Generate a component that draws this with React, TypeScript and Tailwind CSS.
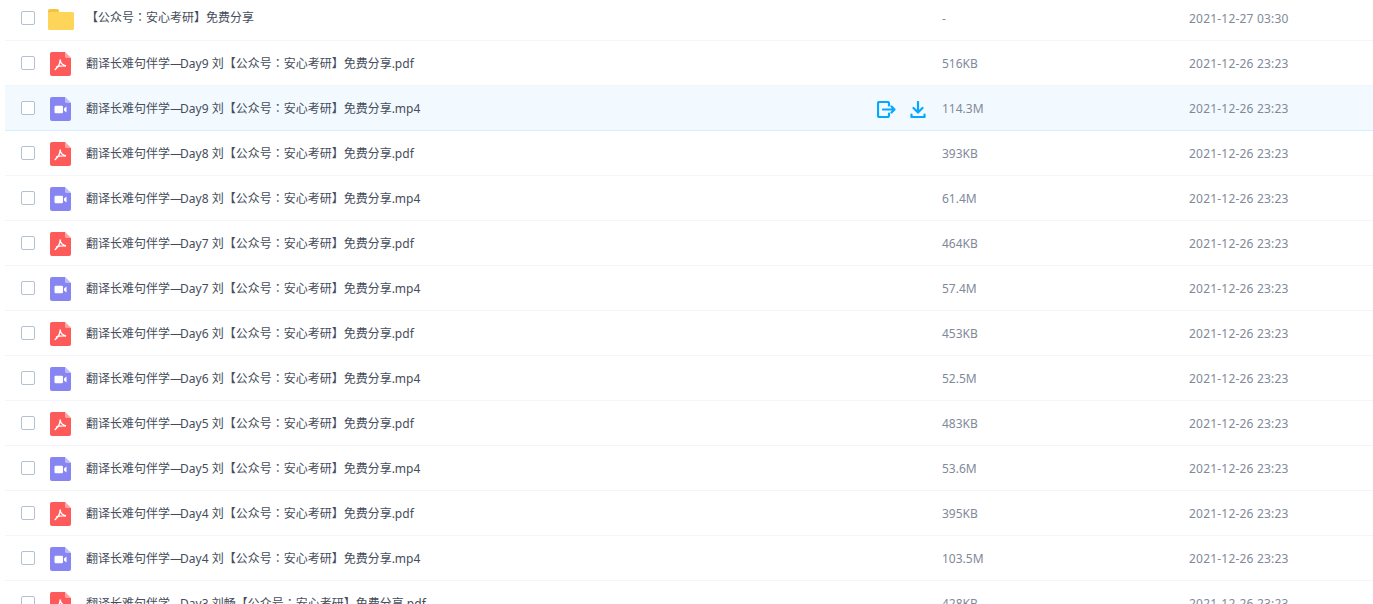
const files = [
  { day: 'Day9 刘', ext: 'pdf', size: '516KB' },
  { day: 'Day9 刘', ext: 'mp4', size: '114.3M', active: true },
  { day: 'Day8 刘', ext: 'pdf', size: '393KB' },
  { day: 'Day8 刘', ext: 'mp4', size: '61.4M' },
  { day: 'Day7 刘', ext: 'pdf', size: '464KB' },
  { day: 'Day7 刘', ext: 'mp4', size: '57.4M' },
  { day: 'Day6 刘', ext: 'pdf', size: '453KB' },
  { day: 'Day6 刘', ext: 'mp4', size: '52.5M' },
  { day: 'Day5 刘', ext: 'pdf', size: '483KB' },
  { day: 'Day5 刘', ext: 'mp4', size: '53.6M' },
  { day: 'Day4 刘', ext: 'pdf', size: '395KB' },
  { day: 'Day4 刘', ext: 'mp4', size: '103.5M' },
  { day: 'Day3 刘畅', ext: 'pdf', size: '428KB' },
]

function FolderIcon() {
  return (
    <svg width="26" height="21" viewBox="0 0 26 21" className="block">
      <path d="M0 2a2 2 0 0 1 2-2h7a2 2 0 0 1 2 2v2H0z" fill="#f5c242" />
      <rect x="0" y="3" width="26" height="18" rx="1.5" fill="#ffd559" />
    </svg>
  )
}

function FileIcon({ ext }: { ext: string }) {
  const color = ext === 'pdf' ? '#ff5a5a' : '#8785f2'
  return (
    <svg width="21" height="24" viewBox="0 0 21 24" className="block">
      <path d="M2 0h13l6 6v16a2 2 0 0 1-2 2H2a2 2 0 0 1-2-2V2a2 2 0 0 1 2-2z" fill={color} />
      <path d="M15 0l6 6h-4.500a1.500 1.500 0 0 1-1.500-1.500z" fill="#fff" fillOpacity="0.45" />
      {ext === 'pdf' ? (
        <path
          d="M10.200 8c-.2 3.500-2 7-5 9.500M10.200 8c.3 3 2 5 5.800 6-3.500-.3-6.500-.2-9.500 1"
          fill="none"
          stroke="#fff"
          strokeWidth="1.400"
          strokeLinecap="round"
        />
      ) : (
        <path d="M4.500 10a1.200 1.200 0 0 1 1.200-1.200h6.100a1.200 1.200 0 0 1 1.200 1.200v5a1.200 1.200 0 0 1-1.200 1.200H5.700A1.200 1.200 0 0 1 4.500 15zM14 11.500l2.500-2v6l-2.500-2z" fill="#fff" />
      )}
    </svg>
  )
}

function Checkbox() {
  return <div className="w-[14px] h-[14px] rounded-[2px] border border-[#b4c1d3] bg-white" />
}

function ShareIcon() {
  return (
    <svg width="19" height="17" viewBox="0 0 19 17" fill="none" stroke="#06a7ff" strokeWidth="2.200" strokeLinecap="round" strokeLinejoin="round" className="block">
      <path d="M12 4.500V2.500A1.500 1.500 0 0 0 10.500 1h-8A1.500 1.500 0 0 0 1 2.500v12A1.500 1.500 0 0 0 2.500 16h8a1.500 1.500 0 0 0 1.500-1.500v-2" />
      <path d="M6 8.500h11.500M14.500 5.500l3 3-3 3" />
    </svg>
  )
}

function DownloadIcon() {
  return (
    <svg width="16" height="17" viewBox="0 0 16 17" fill="none" stroke="#06a7ff" strokeWidth="2.200" strokeLinecap="round" strokeLinejoin="round" className="block">
      <path d="M8 1v10M3.500 7 8 11.500 12.500 7" />
      <path d="M1.500 13.500V16h13v-2.500" />
    </svg>
  )
}

function Name({ lead, text }: { lead?: string; text: string }) {
  // the full-width colon sits centred in the reference, which the TC face does
  const [before, after] = text.split('：')
  return (
    <div className="flex-1 min-w-0 ml-[12px] whitespace-nowrap text-[#454d5a]">
      {lead && (
        <>
          {lead}
          <span className="tracking-[-2px]">—</span>
        </>
      )}
      {before}
      <span className="font-['Noto_Sans_CJK_TC',sans-serif]">：</span>
      {after}
    </div>
  )
}

function Row({
  icon,
  lead,
  name,
  size,
  time,
  active,
  first,
}: {
  icon: React.ReactNode
  lead?: string
  name: string
  size: string
  time: string
  active?: boolean
  first?: boolean
}) {
  return (
    <div
      className={`flex items-center shrink-0 border-b ${first ? 'h-[41px] pb-[5px]' : 'h-[45px]'} ${
        active ? 'bg-[#f3faff] border-[#d5efff]' : 'border-[#f2f5fa]'
      }`}
    >
      <div className="w-[16px] ml-[16px] shrink-0">
        <Checkbox />
      </div>
      <div className={`w-[26px] ml-[11px] shrink-0 flex ${first ? 'mt-[3px]' : 'mt-[2px] pl-[2px]'}`}>{icon}</div>
      <Name lead={lead} text={name} />
      {active && (
        <div className="flex items-center gap-[14px] mr-[16px] mt-[3px]">
          <ShareIcon />
          <DownloadIcon />
        </div>
      )}
      <div className="w-[247px] shrink-0 pt-[2px] text-[#818999]">{size}</div>
      <div className="w-[184px] shrink-0 pt-[2px] tracking-[0.2px] text-[#818999]">{time}</div>
    </div>
  )
}

export default function App() {
  return (
    <div className="h-[604px] overflow-hidden bg-white pl-[5px] text-[12px] font-['Noto_Sans','Noto_Sans_CJK_SC',sans-serif]">
      <Row first icon={<FolderIcon />} name="【公众号：安心考研】免费分享" size="-" time="2021-12-27 03:30" />
      {files.map((f) => (
        <Row
          key={f.day + f.ext}
          icon={<FileIcon ext={f.ext} />}
          lead="翻译长难句伴学"
          name={`${f.day}【公众号：安心考研】免费分享.${f.ext}`}
          size={f.size}
          time="2021-12-26 23:23"
          active={f.active}
        />
      ))}
    </div>
  )
}
